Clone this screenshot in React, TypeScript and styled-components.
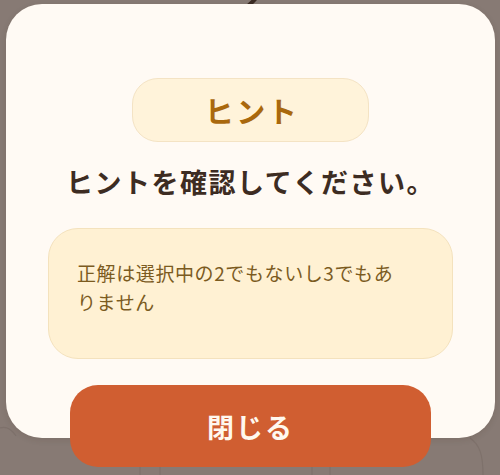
import React from "react";
import styled, { createGlobalStyle } from "styled-components";

const GlobalStyle = createGlobalStyle`
  html, body {
    margin: 0;
    padding: 0;
    background: #877a74;
  }
  * {
    box-sizing: border-box;
  }
`;

const JP_FONT = `"Noto Sans CJK JP", "Noto Sans", sans-serif`;

const Page = styled.div`
  position: relative;
  width: 500px;
  height: 475px;
  overflow: hidden;
  background: #877a74;
  font-family: ${JP_FONT};
`;

// board drawing that shows through the dimmed overlay
const Backdrop = styled.svg`
  position: absolute;
  inset: 0;
  width: 500px;
  height: 475px;
`;

const Overlay = styled.div`
  position: relative;
  display: flex;
  flex-direction: column;
  align-items: center;
  padding-top: 4px;
  padding-left: 1px;
`;

const Card = styled.div`
  width: 489px;
  display: flex;
  flex-direction: column;
  align-items: center;
  padding: 74px 42px 79px;
  background: #fffaf4;
  border-radius: 36px;
  box-shadow: 0 2px 6px rgba(60, 40, 25, 0.12);
`;

const TitlePill = styled.div`
  width: 237px;
  height: 64px;
  display: flex;
  align-items: center;
  justify-content: center;
  background: #fff3da;
  border: 1.5px solid #f4e3c4;
  border-radius: 26px;
  color: #a9680d;
  font-size: 29px;
  font-weight: 700;
  letter-spacing: 2.5px;
  padding-left: 3px;
`;

const Heading = styled.h2`
  margin: 22px 0 0;
  font-size: 27px;
  line-height: 36px;
  font-weight: 700;
  letter-spacing: 1.5px;
  color: #3d2c22;
  white-space: nowrap;
`;

const HintBox = styled.div`
  width: 405px;
  min-height: 131px;
  margin-top: 28px;
  padding: 29px 48px 29px 28px;
  background: #fff1d3;
  border: 1.5px solid #f4e2bd;
  border-radius: 30px;
  color: #7b5b1f;
  font-size: 19px;
  line-height: 29px;
  letter-spacing: 0.6px;
`;

const CloseButton = styled.button`
  width: 361px;
  height: 82px;
  margin-top: -53px;
  border: none;
  border-radius: 28px;
  background: #d05e31;
  color: #fff8ef;
  font-family: ${JP_FONT};
  font-size: 27px;
  font-weight: 700;
  letter-spacing: 2px;
  cursor: pointer;
`;

const App: React.FC = () => {
  return (
    <Page>
      <GlobalStyle />
      <Backdrop viewBox="0 0 500 475">
        <path
          d="M244 9 C248 6 252 3 256 -2"
          stroke="#3a2a22"
          strokeWidth="4"
          strokeLinecap="round"
          fill="none"
        />
        <g stroke="#7e716b" strokeWidth="1.2" fill="none">
          <path d="M140 440 L140 475" />
          <path d="M160 440 L160 475" />
          <path d="M312 440 L312 475" />
          <path d="M330 440 L330 475" />
          <path d="M470 438 C480 445 483 455 483 475" />
          <path d="M0 428 C6 426 12 430 16 436" />
        </g>
      </Backdrop>
      <Overlay>
        <Card>
          <TitlePill>ヒント</TitlePill>
          <Heading>ヒントを確認してください。</Heading>
          <HintBox>正解は選択中の2でもないし3でもありません</HintBox>
        </Card>
        <CloseButton>閉じる</CloseButton>
      </Overlay>
    </Page>
  );
};

export default App;
